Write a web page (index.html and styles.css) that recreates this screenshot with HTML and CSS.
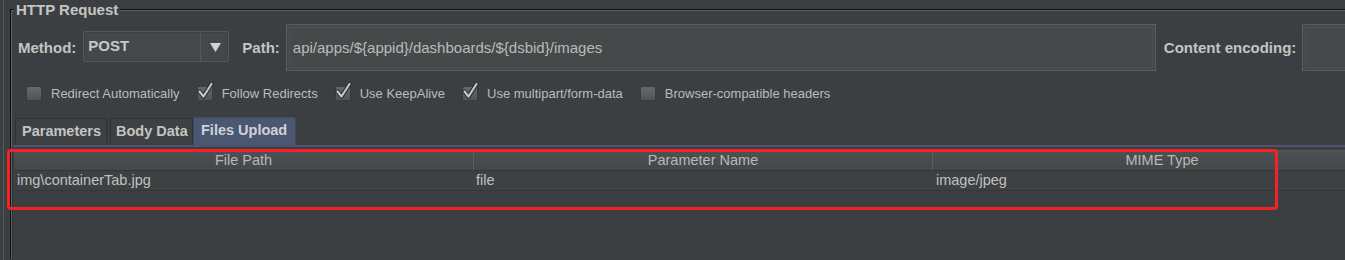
FILE: index.html
```html
<!DOCTYPE html>
<html>
<head>
<meta charset="utf-8">
<link rel="stylesheet" href="styles.css">
</head>
<body>
<div class="frame">
  <fieldset class="group">
    <legend class="group-title">HTTP Request</legend>
    <div class="req-row">
      <span class="lbl">Method:</span>
      <div class="combo">
        <span class="combo-value">POST</span>
        <span class="combo-arrow"><svg width="11" height="9" viewBox="0 0 11 9"><path d="M0 0H11L5.5 9Z" fill="#d2d2d2"/></svg></span>
      </div>
      <span class="lbl lbl-path">Path:</span>
      <div class="field field-path">api/apps/${appid}/dashboards/${dsbid}/images</div>
      <span class="lbl lbl-enc">Content encoding:</span>
      <div class="field field-enc"></div>
    </div>
    <div class="opts">
      <label class="opt"><span class="cb"></span>Redirect Automatically</label>
      <label class="opt"><span class="cb cb-on"><svg class="tick" width="18" height="18" viewBox="0 0 18 18"><path d="M3.5 9.5L7.5 14.5L15.5 2" fill="none" stroke="#2a2b2c" stroke-width="4.2" stroke-linecap="round" stroke-linejoin="round"/><path d="M3.5 9.5L7.5 14.5L15.5 2" fill="none" stroke="#c6c6c6" stroke-width="2.2" stroke-linecap="round" stroke-linejoin="round"/></svg></span>Follow Redirects</label>
      <label class="opt"><span class="cb cb-on"><svg class="tick" width="18" height="18" viewBox="0 0 18 18"><path d="M3.5 9.5L7.5 14.5L15.5 2" fill="none" stroke="#2a2b2c" stroke-width="4.2" stroke-linecap="round" stroke-linejoin="round"/><path d="M3.5 9.5L7.5 14.5L15.5 2" fill="none" stroke="#c6c6c6" stroke-width="2.2" stroke-linecap="round" stroke-linejoin="round"/></svg></span>Use KeepAlive</label>
      <label class="opt"><span class="cb cb-on"><svg class="tick" width="18" height="18" viewBox="0 0 18 18"><path d="M3.5 9.5L7.5 14.5L15.5 2" fill="none" stroke="#2a2b2c" stroke-width="4.2" stroke-linecap="round" stroke-linejoin="round"/><path d="M3.5 9.5L7.5 14.5L15.5 2" fill="none" stroke="#c6c6c6" stroke-width="2.2" stroke-linecap="round" stroke-linejoin="round"/></svg></span>Use multipart/form-data</label>
      <label class="opt"><span class="cb"></span>Browser-compatible headers</label>
    </div>
    <div class="tabs">
      <div class="tab tab-params">Parameters</div>
      <div class="tab tab-body-data">Body Data</div>
      <div class="tab tab-active">Files Upload</div>
    </div>
    <div class="tab-panel">
      <div class="table">
        <div class="thead">
          <div class="th">File Path</div>
          <div class="th">Parameter Name</div>
          <div class="th">MIME Type</div>
        </div>
        <div class="tr">
          <div class="td">img\containerTab.jpg</div>
          <div class="td td-focus">file</div>
          <div class="td">image/jpeg</div>
        </div>
      </div>
    </div>
  </fieldset>
  <div class="highlight"></div>
</div>
</body>
</html>
```

FILE: styles.css
```css
html, body {
  margin: 0;
  padding: 0;
  background: #3c3f41;
  overflow: hidden;
  width: 1345px;
  height: 260px;
}

body {
  font-family: "Liberation Sans", Arial, sans-serif;
  color: #bbbbbb;
}

.frame {
  position: relative;
  margin-left: 3px;
  padding-top: 1px;
  border-left: 1px solid #55585a;
  height: 259px;
  overflow: hidden;
}

.group {
  margin: 0 0 0 6px;
  padding: 0 0 0 6px;
  width: 1400px;
  min-width: 0;
  height: 258px;
  border: 2px groove #5f6264;
  border-right: none;
  border-bottom: none;
  box-sizing: border-box;
}

.group-title {
  margin-left: -4px;
  padding: 0 2px;
  font-weight: bold;
  font-size: 15px;
  line-height: 18px;
  color: #c4c4c4;
}

.req-row {
  display: flex;
  align-items: center;
  height: 47px;
  margin-top: 5px;
}

.lbl {
  font-weight: bold;
  font-size: 15px;
  color: #c4c4c4;
  white-space: nowrap;
}

.combo {
  display: flex;
  margin-left: 7px;
  width: 146px;
  height: 31px;
  box-sizing: border-box;
  border: 1px solid #55585a;
  border-radius: 2px;
  background: #45484a;
  box-shadow: inset 0 0 0 1px #3e4143;
  margin-top: -2px;
}

.combo-value {
  flex: 1;
  padding-left: 4px;
  font-weight: bold;
  font-size: 15px;
  line-height: 28px;
  color: #c8c8c8;
  border-right: 1px solid #55585a;
}

.combo-arrow {
  width: 25px;
  display: flex;
  align-items: center;
  justify-content: center;
  padding-left: 2px;
  padding-top: 1px;
}

.lbl-path {
  margin-left: 13px;
}

.field {
  height: 47px;
  box-sizing: border-box;
  background: #45494a;
  border: 1px solid #5a5d5f;
  box-shadow: inset 0 0 0 2px #45494a, inset 0 0 0 3px #4e5153;
  font-size: 15px;
  line-height: 45px;
  color: #bbbbbb;
  white-space: nowrap;
}

.field-path {
  margin-left: 6px;
  width: 870px;
  padding-left: 6px;
}

.lbl-enc {
  margin-left: 8px;
}

.field-enc {
  margin-left: 6px;
  width: 80px;
}

.opts {
  display: flex;
  align-items: center;
  gap: 17px;
  height: 26px;
  margin-top: 9px;
  padding-left: 8px;
}

.opt {
  display: flex;
  align-items: center;
  gap: 9px;
  font-size: 13px;
  color: #bbbbbb;
  white-space: nowrap;
}

.cb {
  position: relative;
  width: 16px;
  height: 15px;
  box-sizing: border-box;
  border-radius: 2px;
  border: 1px solid #3a3c3e;
  background: linear-gradient(#666a6c, #515456);
}

.tick {
  position: absolute;
  left: -2px;
  top: -5px;
}

.tabs {
  display: flex;
  align-items: flex-end;
  margin-top: 11px;
  margin-left: -3px;
  height: 28px;
}

.tab {
  height: 25px;
  box-sizing: border-box;
  padding: 0 5px;
  font-weight: bold;
  font-size: 14.5px;
  line-height: 24px;
  color: #c4c4c4;
  background: #3e4143;
  border: 1px solid #2f3133;
  border-bottom: none;
  border-radius: 2px 2px 0 0;
  margin-bottom: 2px;
  white-space: nowrap;
}

.tab-params {
  width: 92px;
  margin-right: 3px;
  padding-left: 6px;
}

.tab-body-data {
  width: 83px;
}

.tab-active {
  width: 103px;
  height: 28px;
  margin-bottom: 0;
  line-height: 25px;
  padding-left: 7px;
  background: #4b5670;
  border-color: #3f4a62;
  color: #cfd3da;
}

.tab-panel {
  margin-left: -6px;
  border-top: 2px solid #4a5570;
  border-left: 1px solid #2f3133;
  padding-top: 3px;
  padding-left: 1px;
  height: 110px;
}

.table {
  width: 1378px;
  font-size: 14.5px;
}

.thead {
  display: grid;
  grid-template-columns: 460px 459px 459px;
  height: 19px;
  background: linear-gradient(#4e5153, #45484a);
  border-top: 1px solid #55585a;
  border-bottom: 1px solid #333537;
}

.th {
  text-align: center;
  line-height: 18px;
  color: #b8b8b8;
  border-right: 1px solid #5c5f61;
}

.tr {
  display: grid;
  grid-template-columns: 460px 459px 459px;
  height: 19px;
  background: #3e4143;
  border-bottom: 1px solid #333537;
}

.td {
  padding-left: 3px;
  line-height: 19px;
  color: #c0c0c0;
  white-space: nowrap;
}

.td-focus {
  padding-left: 2px;
}

.highlight {
  position: absolute;
  left: 3px;
  top: 149px;
  width: 1271px;
  height: 61px;
  box-sizing: border-box;
  border: 3px solid #f42222;
  border-radius: 4px;
}
```
